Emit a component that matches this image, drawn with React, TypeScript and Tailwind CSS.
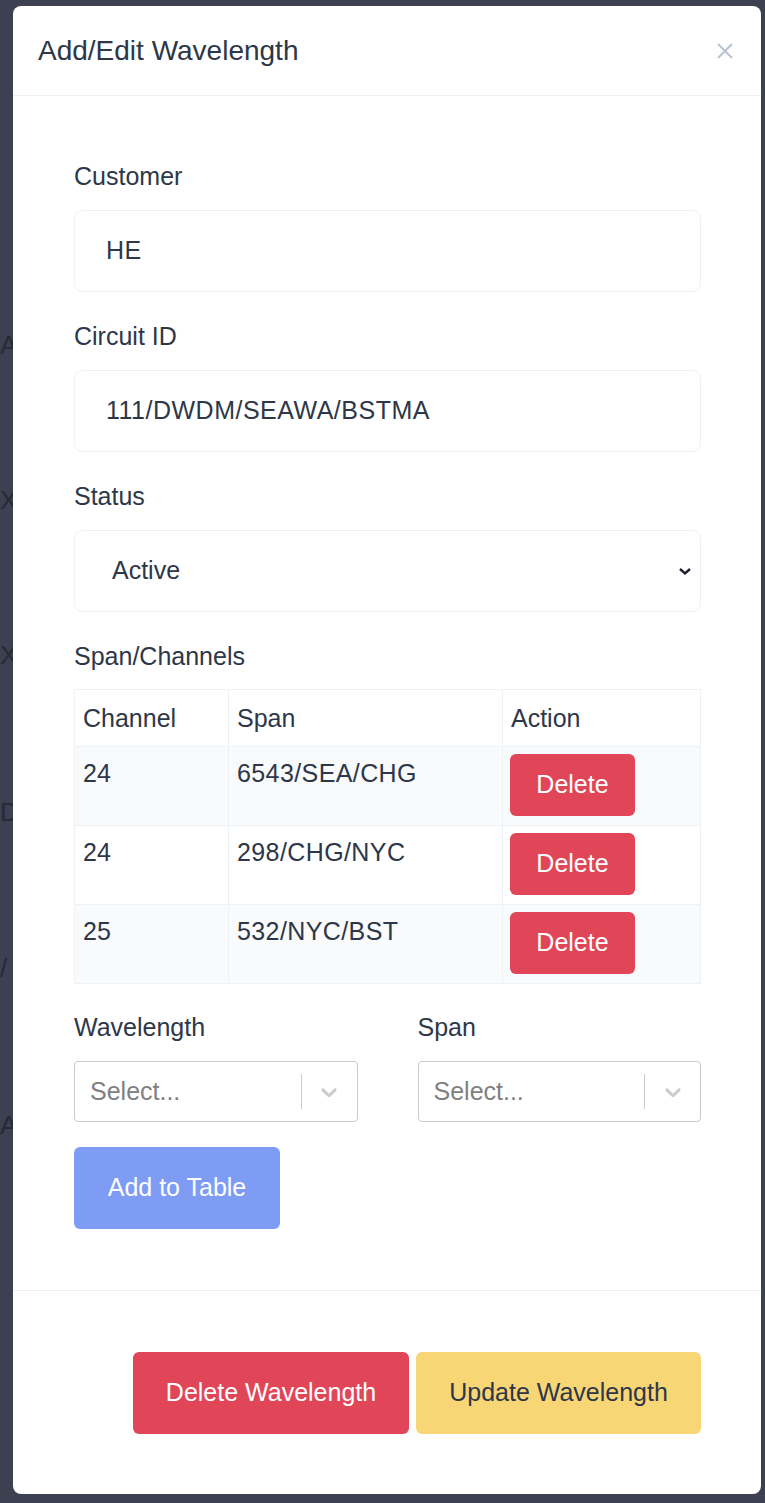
import React from 'react';

const font = { fontFamily: '"Liberation Sans", Arial, sans-serif' };

const rows = [
  { channel: '24', span: '6543/SEA/CHG' },
  { channel: '24', span: '298/CHG/NYC' },
  { channel: '25', span: '532/NYC/BST' },
];

// letters of the page under the overlay, cut by the modal edge
const behind = [
  { text: 'A', top: 'mt-[330px]' },
  { text: 'X', top: 'mt-[125px]' },
  { text: 'X', top: 'mt-[125px]' },
  { text: 'D/', top: 'mt-[127px]' },
  { text: '/', top: 'mt-[126px]' },
  { text: 'A', top: 'mt-[127px]' },
];

function Field({ label, children }: { label: string; children: React.ReactNode }) {
  return (
    <div className="mb-[26px]">
      <div className="text-[25px] leading-[36px] text-[#2d3748] mb-[16px]">{label}</div>
      {children}
    </div>
  );
}

function ReactSelect() {
  return (
    <div className="h-[61px] border border-[#cccccc] rounded-[4px] flex items-center bg-white">
      <div className="flex-1 pl-[15px] text-[25px] text-[#808080]">Select...</div>
      <div className="w-px h-[35px] bg-[#cccccc]" />
      <div className="w-[55px] flex items-center justify-center">
        <svg width="26" height="26" viewBox="0 0 20 20" fill="#cccccc">
          <path d="M4.516 7.548c0.436-0.446 1.043-0.481 1.576 0l3.908 3.747 3.908-3.747c0.533-0.481 1.141-0.446 1.574 0 0.436 0.445 0.408 1.197 0 1.615-0.406 0.418-4.695 4.502-4.695 4.502-0.217 0.223-0.502 0.335-0.787 0.335s-0.57-0.112-0.789-0.335c0 0-4.287-4.084-4.695-4.502s-0.436-1.17 0-1.615z" />
        </svg>
      </div>
    </div>
  );
}

export default function App() {
  return (
    <div className="relative h-[1503px] bg-[#3c4050] overflow-hidden" style={font}>
      {/* page beneath the overlay */}
      <div className="flex flex-col text-[26px] leading-[30px] text-[#262a36]">
        {behind.map((b, i) => (
          <div key={i} className={b.top}>{b.text}</div>
        ))}
      </div>

      {/* modal */}
      <div className="absolute top-[6px] left-[13px] w-[748px] h-[1488px] bg-white rounded-[8px] flex flex-col">
        <div className="h-[90px] border-b border-[#edf2f7] flex items-center justify-between pl-[25px] pr-[27px]">
          <div className="text-[28px] text-[#2d3748]">Add/Edit Wavelength</div>
          <svg width="18" height="18" viewBox="0 0 18 18" stroke="#b8c2d0" strokeWidth="2">
            <line x1="2" y1="2" x2="16" y2="16" />
            <line x1="16" y1="2" x2="2" y2="16" />
          </svg>
        </div>

        <div className="pt-[62px] pb-[61px] pl-[61px] pr-[60px] border-b border-[#edf2f7]">
          <Field label="Customer">
            <div className="h-[82px] border border-[#edf2f7] rounded-[8px] flex items-center px-[31px] text-[25px] text-[#2d3748] tracking-[0.5px]">
              HE
            </div>
          </Field>
          <Field label="Circuit ID">
            <div className="h-[82px] border border-[#edf2f7] rounded-[8px] flex items-center px-[31px] text-[25px] text-[#2d3748] tracking-[0.5px]">
              111/DWDM/SEAWA/BSTMA
            </div>
          </Field>
          <Field label="Status">
            <div className="h-[82px] border border-[#edf2f7] rounded-[8px] flex items-center justify-between pl-[37px] pr-[8px] text-[25px] text-[#2d3748]">
              <span>Active</span>
              <svg width="14" height="10" viewBox="0 0 14 10" fill="none" stroke="#1a202c" strokeWidth="2.4">
                <path d="M2 3l5 4.5L12 3" />
              </svg>
            </div>
          </Field>

          <div className="text-[25px] leading-[36px] text-[#2d3748] mb-[15px]">Span/Channels</div>
          <table className="w-full border-collapse text-[25px] text-[#2d3748]">
            <thead>
              <tr className="bg-white">
                <th className="w-[154px] border border-[#edf2f7] px-[8px] py-[10px] text-left font-normal leading-[36px]">Channel</th>
                <th className="w-[274px] border border-[#edf2f7] px-[8px] py-[10px] text-left font-normal leading-[36px]">Span</th>
                <th className="border border-[#edf2f7] px-[8px] py-[10px] text-left font-normal leading-[36px]">Action</th>
              </tr>
            </thead>
            <tbody>
              {rows.map((r, i) => (
                <tr key={i} className={i % 2 === 0 ? 'bg-[#f8fafc]' : 'bg-white'}>
                  <td className="border border-[#edf2f7] px-[8px] pt-[8px] pb-[10px] align-top leading-[36px]">{r.channel}</td>
                  <td className="border border-[#edf2f7] px-[8px] pt-[8px] pb-[10px] align-top leading-[36px] tracking-[0.4px]">{r.span}</td>
                  <td className="border border-[#edf2f7] px-[7px] pt-[7px] pb-[9px] align-top">
                    <button className="h-[62px] w-[125px] rounded-[6px] bg-[#e04558] text-white text-[25px]">Delete</button>
                  </td>
                </tr>
              ))}
            </tbody>
          </table>

          <div className="grid grid-cols-2 gap-[60px] mt-[25px] mb-[25px]">
            <div>
              <div className="text-[25px] leading-[36px] text-[#2d3748] mb-[16px]">Wavelength</div>
              <ReactSelect />
            </div>
            <div>
              <div className="text-[25px] leading-[36px] text-[#2d3748] mb-[16px]">Span</div>
              <ReactSelect />
            </div>
          </div>

          <button className="h-[82px] w-[206px] rounded-[6px] bg-[#7f9cf5] text-white text-[25px]">Add to Table</button>
        </div>

        <div className="flex justify-end gap-[7px] pt-[61px] pr-[60px]">
          <button className="h-[82px] w-[276px] rounded-[6px] bg-[#e04558] text-white text-[25px]">Delete Wavelength</button>
          <button className="h-[82px] w-[285px] rounded-[6px] bg-[#f8d676] text-[#2d3748] text-[25px]">Update Wavelength</button>
        </div>
      </div>
    </div>
  );
}
